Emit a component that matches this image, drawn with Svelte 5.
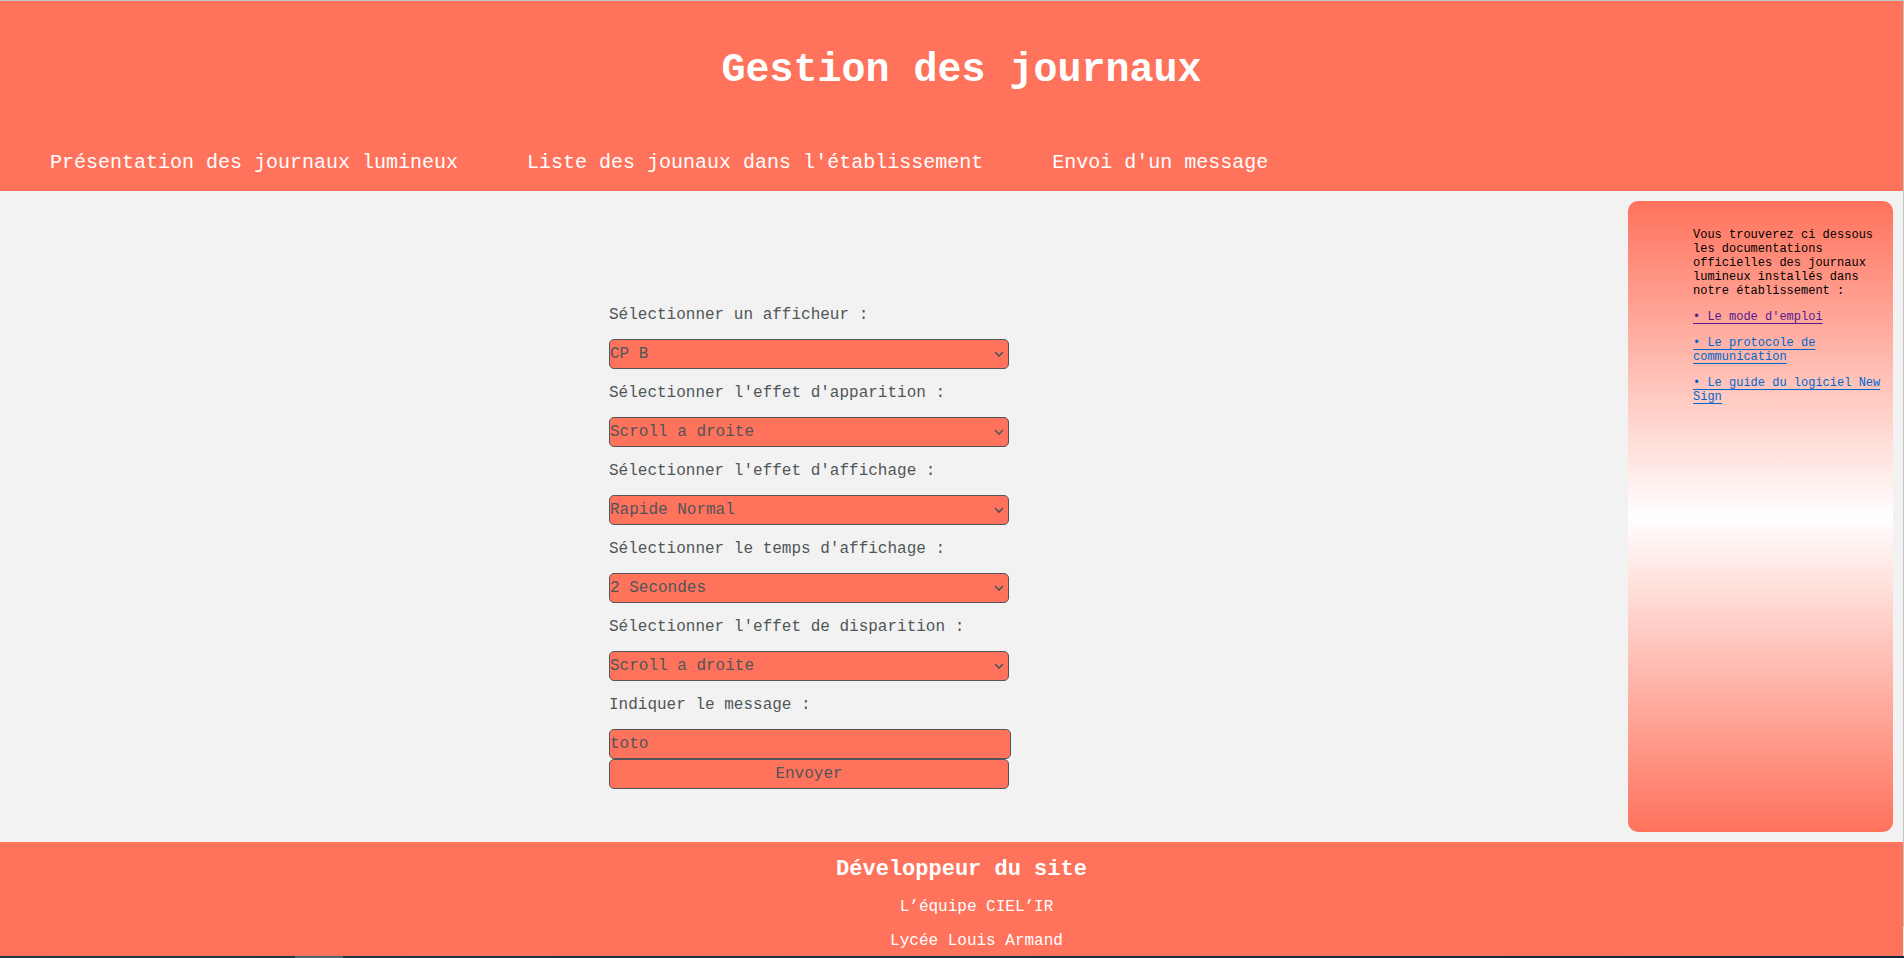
<script>
  const navigation = [
    'Présentation des journaux lumineux',
    "Liste des jounaux dans l'établissement",
    "Envoi d'un message"
  ];

  const fields = [
    { id: 'afficheur', label: 'Sélectionner un afficheur :', value: 'CP B' },
    { id: 'apparition', label: "Sélectionner l'effet d'apparition :", value: 'Scroll a droite' },
    { id: 'affichage', label: "Sélectionner l'effet d'affichage :", value: 'Rapide Normal' },
    { id: 'temps', label: "Sélectionner le temps d'affichage :", value: '2 Secondes' },
    { id: 'disparition', label: "Sélectionner l'effet de disparition :", value: 'Scroll a droite' }
  ];

  const documents = [
    { title: "Le mode d'emploi", visited: true },
    { title: 'Le protocole de communication', visited: false },
    { title: 'Le guide du logiciel New Sign', visited: false }
  ];

  let message = $state('toto');
</script>

<div class="window">
  <div class="view">
    <div class="page">
      <header>
        <h1>Gestion des journaux</h1>
        <nav>
          {#each navigation as item}
            <a href="#top">{item}</a>
          {/each}
        </nav>
      </header>

      <main>
        <section>
          <form onsubmit={(event) => event.preventDefault()}>
            {#each fields as field}
              <label for={field.id}>{field.label}</label>
              <select id={field.id}>
                <option>{field.value}</option>
              </select>
            {/each}
            <label for="message">Indiquer le message :</label>
            <input id="message" type="text" bind:value={message} />
            <button type="submit">Envoyer</button>
          </form>
        </section>

        <aside>
          <p>
            Vous trouverez ci dessous les documentations officielles des journaux lumineux
            installés dans notre établissement :
          </p>
          {#each documents as doc}
            <p><a href="#docs" class:visited={doc.visited}>• {doc.title}</a></p>
          {/each}
        </aside>
      </main>

      <footer>
        <h2>Développeur du site</h2>
        <p>L’équipe CIEL’IR</p>
        <p>Lycée Louis Armand</p>
      </footer>
    </div>
    <div class="rail"><div class="thumb"></div></div>
  </div>
  <div class="taskbar"><div class="task"></div></div>
</div>

<style>
  :global(body) {
    margin: 0;
  }

  .window {
    --coral: #ff725c;
    --ink: #505658;
    display: flex;
    flex-direction: column;
    box-sizing: border-box;
    min-height: 100vh;
    border-top: 1px solid #c8c8c8;
    background: #f2f2f2;
    font: 16px/18px 'Courier New', 'Liberation Mono', monospace;
  }

  .view {
    flex: 1;
    display: flex;
  }

  .page {
    flex: 1;
    display: flex;
    flex-direction: column;
  }

  header {
    padding: 47px 0 16px;
    background: var(--coral);
    color: #fff;
  }

  h1 {
    margin: 0 0 57px;
    padding-left: 20px;
    font-size: 40px;
    line-height: 46px;
    text-align: center;
  }

  nav {
    display: flex;
    flex-wrap: wrap;
    gap: 0 69px;
    padding-left: 50px;
    font-size: 20px;
    line-height: 24px;
  }

  nav a {
    color: #fff;
    text-decoration: none;
  }

  main {
    flex: 1;
    display: flex;
  }

  section {
    flex: 1;
    display: flex;
    justify-content: center;
    align-items: center;
    padding-top: 62px;
  }

  form {
    display: flex;
    flex-direction: column;
    width: 400px;
    color: var(--ink);
  }

  label {
    margin-bottom: 15px;
  }

  select,
  input,
  button {
    box-sizing: border-box;
    width: 400px;
    height: 30px;
    margin: 0;
    padding: 0;
    border: 1px solid var(--ink);
    border-radius: 5px;
    background-color: var(--coral);
    color: var(--ink);
    font: inherit;
  }

  select {
    appearance: none;
    margin-bottom: 15px;
    background-image: url("data:image/svg+xml,%3Csvg xmlns='http://www.w3.org/2000/svg' width='10' height='8' viewBox='0 0 10 8'%3E%3Cpath d='M1 2l4 4 4-4' fill='none' stroke='%23505658' stroke-width='1.6'/%3E%3C/svg%3E");
    background-repeat: no-repeat;
    background-position: right 4px center;
  }

  input {
    width: 402px;
  }

  aside {
    box-sizing: border-box;
    width: 265px;
    margin: 10px;
    padding: 27px 8px 27px 65px;
    border-radius: 10px;
    background: linear-gradient(var(--coral), #fff, var(--coral));
    color: #000;
    font-size: 12px;
    line-height: 14px;
  }

  aside p {
    margin: 0 0 12px;
  }

  aside a {
    color: #0066cc;
    text-decoration: underline;
    text-decoration-thickness: 1px;
    text-decoration-skip-ink: none;
    text-underline-offset: 3px;
  }

  aside a.visited {
    color: #551a8b;
  }

  footer {
    padding: 15px 0 6px 20px;
    background: var(--coral);
    color: #fff;
    text-align: center;
  }

  h2 {
    margin: 0;
    font-size: 22px;
    line-height: 25px;
  }

  footer p {
    margin: 16px 0 0 30px;
  }

  .rail {
    display: flex;
    flex-direction: column;
    width: 1px;
    background: #f1f1f1;
  }

  .thumb {
    height: 97%;
    background: #c1c1c1;
  }

  .taskbar {
    height: 2px;
    padding-left: 295px;
    background: linear-gradient(90deg, #263a46, #1b2540);
  }

  .task {
    width: 48px;
    height: 2px;
    background: #546570;
  }
</style>
